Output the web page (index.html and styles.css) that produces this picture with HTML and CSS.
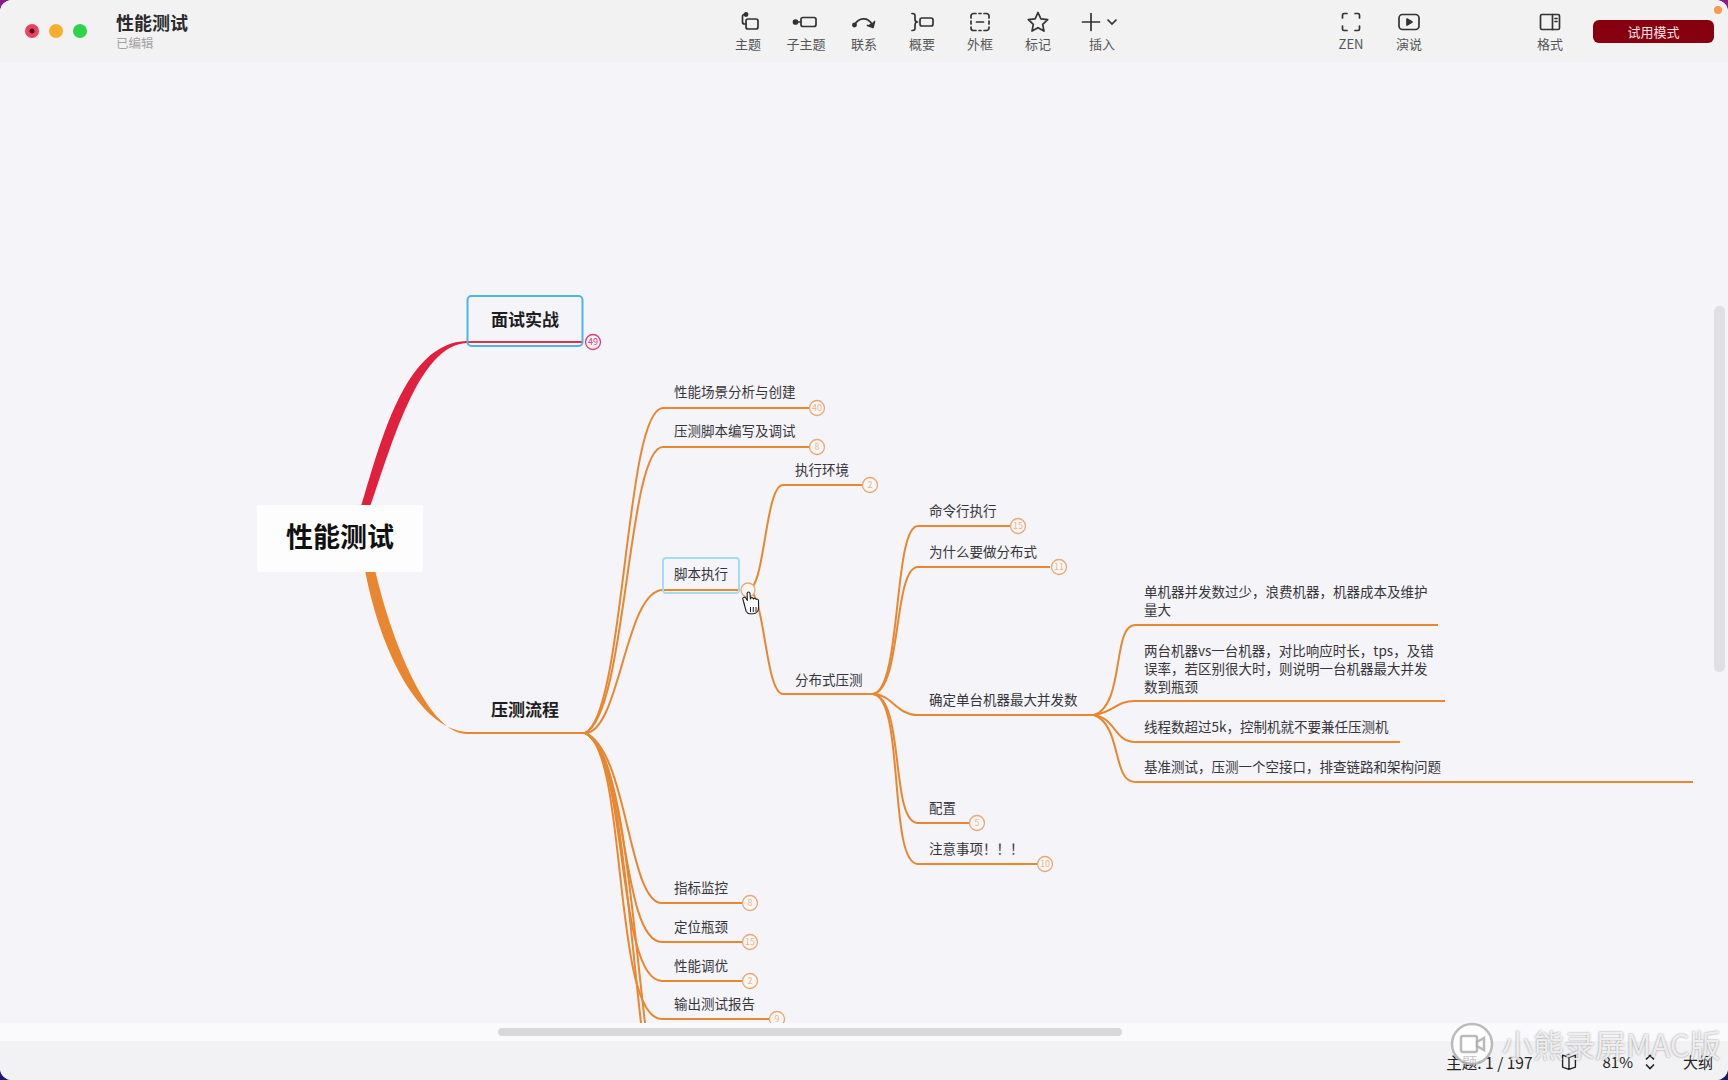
FILE: index.html
```html
<!DOCTYPE html>
<html lang="zh-CN">
<head>
  <meta charset="UTF-8" />
  <title>性能测试</title>
  <link rel="stylesheet" href="styles.css">
</head>
<body>
<div class="window">

  <!-- toolbar -->
  <header class="toolbar">
    <div class="doc">
      <div class="lights">
        <span class="light red"></span>
        <span class="light yellow"></span>
        <span class="light green"></span>
      </div>
      <div class="doc-title">
        <div class="doc-name">性能测试</div>
        <div class="doc-state">已编辑</div>
      </div>
    </div>

    <div class="tool">
      <svg class="icon nudge" viewBox="0 0 24 24"><circle cx="8" cy="4.500" r="1.600" class="solid"/><path d="M8 4.500H6.500a2 2 0 0 0-2 2V12a2 2 0 0 0 2 2H8"/><rect x="8" y="9" width="12" height="10" rx="2"/></svg>
      <span>主题</span>
    </div>
    <div class="tool">
      <svg class="icon wide" viewBox="0 0 28 24"><circle cx="3.500" cy="12" r="2" class="solid"/><path d="M3.500 12H9"/><rect x="9" y="7.500" width="15" height="9" rx="2"/></svg>
      <span>子主题</span>
    </div>
    <div class="tool">
      <svg class="icon" viewBox="0 0 24 24"><circle cx="2.500" cy="15" r="1.600" class="solid"/><path d="M2.500 15C6 8 15 6 20 14"/><path d="M22.500 11.500L21 17.500 15.500 15.500" class="solid"/></svg>
      <span>联系</span>
    </div>
    <div class="tool">
      <svg class="icon wide" viewBox="0 0 28 24"><path d="M4 3.500c3 0 3 1 3 3V9c0 2 1 3 2.500 3C8 12 7 13 7 15v2.500c0 2 0 3-3 3"/><rect x="12" y="8" width="13" height="8" rx="2"/></svg>
      <span>概要</span>
    </div>
    <div class="tool">
      <svg class="icon" viewBox="0 0 24 24"><path d="M8 3.500H5.500a2.500 2.500 0 0 0-2.500 2.500V8M16 3.500h2.500A2.500 2.500 0 0 1 21 6V8M3 11v3M21 11v3M3 17v1a2.500 2.500 0 0 0 2.500 2.500H8M21 17v1a2.500 2.500 0 0 1-2.500 2.500H16M11 3.500h2M11 20.500h2M8.500 12h7"/></svg>
      <span>外框</span>
    </div>
    <div class="tool">
      <svg class="icon" viewBox="0 0 24 24"><path d="M12 2.500l2.900 6.300 6.800.8-5 4.700 1.300 6.800-6-3.400-6 3.400 1.300-6.800-5-4.700 6.800-.8z"/></svg>
      <span>标记</span>
    </div>
    <div class="tool tool-insert">
      <div class="insert-icons">
        <svg class="icon" viewBox="0 0 24 24"><path d="M12 3.500v17M3.500 12h17"/></svg>
        <svg class="chevron" viewBox="0 0 12 12"><path d="M1.500 3.500L6 8l4.500-4.500"/></svg>
      </div>
      <span>插入</span>
    </div>

    <div class="tool view-first">
      <svg class="icon" viewBox="0 0 24 24"><path d="M8 3.500H5a1.500 1.500 0 0 0-1.500 1.500v3M16 3.500h3A1.500 1.500 0 0 1 20.500 5v3M3.500 16v3A1.500 1.500 0 0 0 5 20.500h3M20.500 16v3a1.500 1.500 0 0 1-1.500 1.500h-3"/></svg>
      <span>ZEN</span>
    </div>
    <div class="tool">
      <svg class="icon" viewBox="0 0 24 24"><rect x="2" y="4.500" width="20" height="15" rx="3.500"/><path d="M10 9l5 3-5 3z" class="solid"/></svg>
      <span>演说</span>
    </div>

    <div class="tool format-tool">
      <svg class="icon" viewBox="0 0 24 24"><rect x="2.500" y="4.500" width="19" height="15" rx="1.500"/><path d="M14.500 4.500v15M17 8.500h2M17 11.500h2"/></svg>
      <span>格式</span>
    </div>
    <div class="trial">试用模式</div>
    <span class="notify-dot"></span>
  </header>

  <!-- mind map -->
  <main class="canvas">
    <svg class="map" viewBox="0 62 1728 961" width="1728" height="961">
      <!-- main branches -->
      <path class="fat red-fill" d="M360 510C380 445 404 342 467 341L467 343C418 345 392 445 369 510Z"/>
      <path class="fat orange-fill" d="M365 570C380 650 418 728 467 732L585 732 585 734 467 734C432 734 395 655 375 570Z"/>
      <path class="line red-line" d="M467 342H583"/>

      <!-- level 2 upward -->
      <path class="line" d="M585 733C625 715 625 408 663 408H810"/>
      <path class="line" d="M585 733C627 715 627 447 663 447H810"/>
      <path class="line" d="M585 733C620 733 625 590 663 590H740"/>

      <!-- level 2 downward -->
      <path class="line" d="M585 733C628 750 628 903 662 903H742"/>
      <path class="line" d="M585 733C628 750 620 942 662 942H742"/>
      <path class="line" d="M585 733C628 750 616 981 662 981H742"/>
      <path class="line" d="M585 733C628 750 612 1019 662 1019H769"/>
      <path class="line" d="M585 733C622 750 630 900 647 1040"/>
      <path class="line" d="M585 733C620 750 626 900 643 1040"/>

      <!-- 脚本执行 -->
      <path class="line" d="M748 590C765 590 765 485 783 485H862"/>
      <path class="line" d="M748 590C765 590 765 694 783 694H873"/>

      <!-- 分布式压测 -->
      <path class="line" d="M873 694C902 690 893 526 918 526H1010"/>
      <path class="line" d="M873 694C902 690 893 567 918 567H1050"/>
      <path class="line" d="M873 694C892 694 896 715 918 715H1094"/>
      <path class="line" d="M873 694C905 698 890 823 918 823H970"/>
      <path class="line" d="M873 694C905 698 888 864 918 864H1037"/>

      <!-- 确定单台机器最大并发数 -->
      <path class="line" d="M1094 715C1125 705 1112 625 1135 625H1438"/>
      <path class="line" d="M1094 715C1115 712 1115 701 1135 701H1445"/>
      <path class="line" d="M1094 715C1115 718 1115 742 1135 742H1400"/>
      <path class="line" d="M1094 715C1122 725 1112 782 1135 782H1693"/>

      <!-- nodes -->
      <rect class="root" x="257" y="505" width="166" height="67" rx="3"/>
      <text class="t-root" x="340" y="547">性能测试</text>

      <rect class="focus" x="467.500" y="296" width="115" height="50" rx="4"/>
      <text class="t-main" x="525" y="326">面试实战</text>
      <text class="t-main" x="525" y="716">压测流程</text>

      <rect class="focus thin" x="663" y="558" width="76" height="35" rx="3"/>

      <text class="label" x="674" y="397">性能场景分析与创建</text>
      <text class="label" x="674" y="436">压测脚本编写及调试</text>
      <text class="label" x="674" y="579">脚本执行</text>
      <text class="label" x="674" y="893">指标监控</text>
      <text class="label" x="674" y="932">定位瓶颈</text>
      <text class="label" x="674" y="971">性能调优</text>
      <text class="label" x="674" y="1009">输出测试报告</text>

      <text class="label" x="795" y="475">执行环境</text>
      <text class="label" x="795" y="685">分布式压测</text>

      <text class="label" x="929" y="516">命令行执行</text>
      <text class="label" x="929" y="557">为什么要做分布式</text>
      <text class="label" x="929" y="705">确定单台机器最大并发数</text>
      <text class="label" x="929" y="813">配置</text>
      <text class="label" x="929" y="854">注意事项！！！</text>

      <text class="label" x="1144" y="597">单机器并发数过少，浪费机器，机器成本及维护</text>
      <text class="label" x="1144" y="615">量大</text>
      <text class="label" x="1144" y="656">两台机器vs一台机器，对比响应时长，tps，及错</text>
      <text class="label" x="1144" y="674">误率，若区别很大时，则说明一台机器最大并发</text>
      <text class="label" x="1144" y="692">数到瓶颈</text>
      <text class="label" x="1144" y="732">线程数超过5k，控制机就不要兼任压测机</text>
      <text class="label" x="1144" y="772">基准测试，压测一个空接口，排查链路和架构问题</text>

      <!-- collapsed counts -->
      <g class="badge pink"><circle cx="593" cy="342" r="7.500"/><text x="593" y="345">49</text></g>
      <g class="badge"><circle cx="817" cy="408" r="7.500"/><text x="817" y="411">40</text></g>
      <g class="badge"><circle cx="817" cy="447" r="7.500"/><text x="817" y="450">8</text></g>
      <g class="badge"><circle cx="748" cy="590" r="7"/></g>
      <g class="badge"><circle cx="870" cy="485" r="7.500"/><text x="870" y="488">2</text></g>
      <g class="badge"><circle cx="1018" cy="526" r="7.500"/><text x="1018" y="529">15</text></g>
      <g class="badge"><circle cx="1059" cy="567" r="7.500"/><text x="1059" y="570">11</text></g>
      <g class="badge"><circle cx="977" cy="823" r="7.500"/><text x="977" y="826">5</text></g>
      <g class="badge"><circle cx="1045" cy="864" r="7.500"/><text x="1045" y="867">10</text></g>
      <g class="badge"><circle cx="750" cy="903" r="7.500"/><text x="750" y="906">8</text></g>
      <g class="badge"><circle cx="750" cy="942" r="7.500"/><text x="750" y="945">15</text></g>
      <g class="badge"><circle cx="750" cy="981" r="7.500"/><text x="750" y="984">2</text></g>
      <g class="badge"><circle cx="777" cy="1019" r="7.500"/><text x="777" y="1022">9</text></g>

      <!-- mouse pointer -->
      <g transform="matrix(1.25 0 0 1.25 -190.750 -143)">
        <path class="hand" d="M747 594c-.8-1.500 1-2.600 2-1.400l1.500 2.100-.2-5.500c0-1.600 2.200-1.600 2.300 0l.3 4.300c.3-1.400 2.200-1.300 2.400.1.500-1 2-.8 2.200.4.600-.7 1.900-.3 1.900.8l.1 5c0 3-1.500 5.600-4.500 5.600h-2.500c-1.500 0-2.300-.8-3-2z"/>
        <path class="hand-lines" d="M753 600v4M755.200 600v4M757.400 600v4"/>
      </g>
    </svg>
    <div class="vscroll"></div>
  </main>

  <div class="hscroll-band">
    <div class="hscroll"></div>
  </div>

  <footer class="status">
    <span class="count">主题: 1 / 197</span>
    <svg class="map-icon" viewBox="0 0 24 24"><path d="M12 7L5 4.500v13l7 2.500 7-2.500v-13zM12 7v13M12 3v4M9.500 4.500h5"/></svg>
    <span class="zoom-value">81%</span>
    <svg class="updown" viewBox="0 0 12 18"><path d="M2 6.500l4-4 4 4M2 11.500l4 4 4-4"/></svg>
    <span class="outline">大纲</span>
  </footer>

  <!-- recorder watermark -->
  <div class="watermark">
    <svg class="wm-logo" viewBox="0 0 44 44"><circle cx="22" cy="22" r="20"/><rect x="11" y="14" width="16" height="16" rx="2"/><path d="M27 20l7-4v12l-7-4z"/></svg>
    <span>小熊录屏MAC版</span>
  </div>
</div>
</body>
</html>
```

FILE: styles.css
```css
html, body {
  margin: 0;
  height: 100%;
}
body {
  background: linear-gradient(180deg, #8c1a8e, #1c1a70);
  font-family: "Noto Sans CJK SC", "Noto Sans", sans-serif;
  overflow: hidden;
}
.window {
  position: relative;
  width: 1728px;
  height: 1080px;
  display: flex;
  flex-direction: column;
  border-radius: 12px;
  overflow: hidden;
  background: #f5f4f9;
}

/* toolbar */
.toolbar {
  position: relative;
  flex: none;
  height: 62px;
  display: flex;
  align-items: flex-start;
  background: #f2f2f3;
  padding-right: 14px;
  box-sizing: border-box;
}
.doc {
  flex: none;
  width: 719px;
  display: flex;
}
.lights {
  display: flex;
  gap: 10px;
  padding: 24px 0 0 25px;
}
.light {
  display: block;
  width: 14px;
  height: 14px;
  border-radius: 50%;
}
.light.red {
  background: radial-gradient(circle, #5a0a14 0 2px, #ec4160 3px);
}
.light.yellow { background: #f8ae2c; }
.light.green { background: #2fd34a; }
.doc-title {
  margin-left: 29px;
  padding-top: 10px;
}
.doc-name {
  font-size: 18px;
  line-height: 24px;
  font-weight: 700;
  color: #2a2a2c;
}
.doc-state {
  margin-top: 1px;
  font-size: 12.5px;
  line-height: 16px;
  color: #a2a2a4;
}
.tool {
  flex: none;
  width: 58px;
  padding-top: 10px;
  display: flex;
  flex-direction: column;
  align-items: center;
  color: #555;
  font-size: 13px;
  line-height: 18px;
}
.tool span { margin-top: 1px; }
.icon {
  display: block;
  width: 24px;
  height: 24px;
  fill: none;
  stroke: #333;
  stroke-width: 1.7;
  stroke-linecap: round;
  stroke-linejoin: round;
}
.icon.wide { width: 28px; }
.icon.nudge { margin-left: 4px; }
.icon .solid { fill: #333; }
.tool-insert { width: 70px; }
.insert-icons {
  display: flex;
  align-items: center;
  gap: 3px;
  align-self: flex-start;
  margin-left: 12px;
}
.chevron {
  width: 12px;
  height: 12px;
  fill: none;
  stroke: #333;
  stroke-width: 1.7;
}
.view-first { margin-left: auto; }
.format-tool { margin-left: 83px; }
.trial {
  flex: none;
  width: 121px;
  height: 23px;
  margin: 20px 0 0 14px;
  border-radius: 6px;
  background: #860010;
  color: #f3e4e4;
  font-size: 13px;
  line-height: 23px;
  text-align: center;
}
.notify-dot {
  position: absolute;
  top: 6px;
  right: 6px;
  width: 8px;
  height: 8px;
  border-radius: 50%;
  background: #f59a4e;
}

/* canvas */
.canvas {
  position: relative;
  flex: none;
  height: 961px;
  overflow: hidden;
}
.map {
  display: block;
}
.fat { stroke: none; }
.red-fill { fill: #e0203c; }
.orange-fill { fill: #e8872f; }
.line {
  fill: none;
  stroke: #e8872f;
  stroke-width: 2;
}
.red-line { stroke: #dc3545; }
.root { fill: #fdfdfe; }
.focus {
  fill: none;
  stroke: #4fb4e6;
  stroke-width: 2;
}
.focus.thin {
  stroke: #a4dcf2;
}
.t-root {
  font-size: 27px;
  font-weight: 700;
  fill: #111;
  text-anchor: middle;
}
.t-main {
  font-size: 17px;
  font-weight: 700;
  fill: #1e1e22;
  text-anchor: middle;
}
.label {
  font-size: 13.5px;
  fill: #35353a;
}
.badge circle {
  fill: #f9f6f4;
  stroke: #e9a877;
  stroke-width: 1.3;
}
.badge text {
  font-size: 9px;
  fill: #eeb78c;
  text-anchor: middle;
}
.badge.pink circle {
  fill: #f8f2f6;
  stroke: #d8427a;
}
.badge.pink text { fill: #d8427a; }
.hand {
  fill: #fff;
  stroke: #222;
  stroke-width: .9;
  stroke-linejoin: round;
}
.hand-lines {
  fill: none;
  stroke: #222;
  stroke-width: .8;
}
.vscroll {
  position: absolute;
  top: 244px;
  right: 3px;
  width: 11px;
  height: 366px;
  border-radius: 5px;
  background: #e0e0e2;
}

/* bottom */
.hscroll-band {
  flex: none;
  height: 18px;
  background: #faf9fc;
  display: flex;
  align-items: center;
}
.hscroll {
  width: 624px;
  height: 8px;
  margin-left: 498px;
  border-radius: 4px;
  background: #d8d8da;
}
.status {
  flex: 1;
  display: flex;
  align-items: center;
  justify-content: flex-end;
  padding: 2px 15px 0 0;
  background: #f2f1f4;
  color: #222;
  font-size: 15px;
  line-height: 18px;
}
.count { font-size: 15.5px; }
.map-icon {
  width: 22px;
  height: 22px;
  margin-left: 25px;
  fill: none;
  stroke: #222;
  stroke-width: 1.5;
  stroke-linejoin: round;
}
.zoom-value { margin-left: 23px; }
.updown {
  width: 12px;
  height: 18px;
  margin-left: 11px;
  fill: none;
  stroke: #222;
  stroke-width: 1.6;
}
.outline { margin-left: 27px; }
.watermark {
  position: absolute;
  left: 1450px;
  top: 1022px;
  display: flex;
  align-items: center;
  gap: 8px;
  color: rgba(255, 255, 255, .82);
  font-size: 31px;
  line-height: 44px;
  white-space: nowrap;
  text-shadow: 0 0 2px rgba(90, 90, 90, .7);
}
.wm-logo {
  width: 44px;
  height: 44px;
  fill: rgba(255, 255, 255, .75);
  stroke: rgba(170, 170, 170, .8);
  stroke-width: 2.5;
}
```
